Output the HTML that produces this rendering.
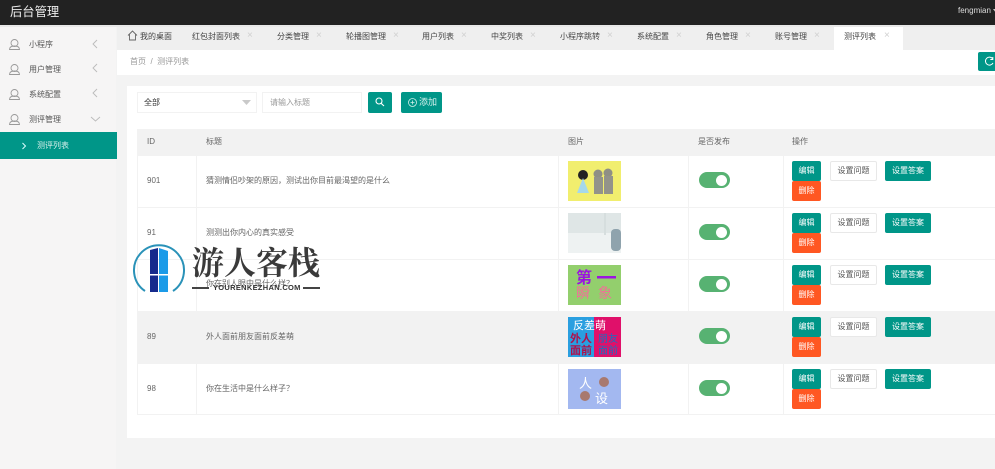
<!DOCTYPE html>
<html lang="zh">
<head>
<meta charset="utf-8">
<style>
*{box-sizing:border-box}
html,body{margin:0;padding:0;width:995px;height:469px;overflow:hidden;background:#f3f3f3;font-family:"Liberation Sans","Noto Sans CJK SC",sans-serif;color:#666}
#p{position:absolute;left:0;top:0;width:995px;height:469px;overflow:hidden;filter:blur(.35px)}
.a{position:absolute;white-space:nowrap}
.t{font-size:8px;line-height:12px;color:#444}
.x{font-size:10px;line-height:12px;color:#d0d0d0}
.m{font-size:8px;line-height:12px;color:#555}
.c{font-size:8px;line-height:12px;color:#666}
.b{height:20px;line-height:20px;font-size:8px;text-align:center;border-radius:2px;color:#fff;background:#009688}
.r{background:#ff5722}
.w{background:#fff;color:#555;border:1px solid #e8e8e8;line-height:18px}
.sw{left:699px;width:31px;height:16px;border-radius:8px;background:#57b272}
.sw i{position:absolute;left:17px;top:2.500px;width:11px;height:11px;border-radius:50%;background:#fff}
.hl{left:137px;width:858px;height:1px;background:#f2f2f2}
.vl{width:1px;background:#f2f2f2;top:129px;height:286px}
</style>
</head>
<body>
<div id="p">
<div class="a" style="left:0;top:0;width:995px;height:25px;background:#222"></div>
<div class="a" style="left:10px;top:2px;font-size:12.300px;line-height:20px;color:#eee">后台管理</div>
<div class="a" style="left:958px;top:5px;font-size:8px;line-height:12px;color:#ddd">fengmian</div>
<div class="a" style="left:993px;top:9px;width:0;height:0;border-left:3px solid transparent;border-right:3px solid transparent;border-top:4px solid #ccc"></div>

<div class="a" style="left:0;top:25px;width:995px;height:2px;background:#e8e8e8"></div>
<div class="a" style="left:0;top:27px;width:116px;height:442px;background:#f6f5f5"></div>

<!-- sidebar -->
<svg class="a" style="left:0;top:27px" width="116" height="105" fill="none" stroke="#999" stroke-width=".9">
<g><circle cx="14.500" cy="16" r="3.500"/><path d="M9.500 22.500c0-2.500 2-3.500 5-3.500s5 1 5 3.500z"/></g>
<g transform="translate(0,25)"><circle cx="14.500" cy="16" r="3.500"/><path d="M9.500 22.500c0-2.500 2-3.500 5-3.500s5 1 5 3.500z"/></g>
<g transform="translate(0,50)"><circle cx="14.500" cy="16" r="3.500"/><path d="M9.500 22.500c0-2.500 2-3.500 5-3.500s5 1 5 3.500z"/></g>
<g transform="translate(0,75)"><circle cx="14.500" cy="16" r="3.500"/><path d="M9.500 22.500c0-2.500 2-3.500 5-3.500s5 1 5 3.500z"/></g>
<path stroke="#bbb" d="M97 13l-4 4 4 4M97 37l-4 4 4 4M97 62l-4 4 4 4M91 90l4.500 4 4.500-4"/>
</svg>
<div class="a m" style="left:29px;top:39px">小程序</div>
<div class="a m" style="left:29px;top:64px">用户管理</div>
<div class="a m" style="left:29px;top:89px">系统配置</div>
<div class="a m" style="left:29px;top:114px">测评管理</div>
<div class="a" style="left:0;top:132px;width:117px;height:27px;background:#009688"></div>
<svg class="a" style="left:21px;top:142px" width="6" height="8" fill="none" stroke="#dff" stroke-width="1"><path d="M1.500 1l3 3-3 3"/></svg>
<div class="a" style="left:37px;top:140px;font-size:8px;line-height:12px;color:#d8f0ec">测评列表</div>

<!-- tabs -->
<div class="a" style="left:117px;top:27px;width:878px;height:23px;background:#efefef"></div>
<div class="a" style="left:834px;top:27px;width:69px;height:23px;background:#fff"></div>
<svg class="a" style="left:127px;top:30px" width="11" height="11" fill="none" stroke="#666" stroke-width=".9"><path d="M1 5.500L5.500 1 10 5.500M2.500 4.500V10h6V4.500"/></svg>
<div class="a t" style="left:140px;top:31px">我的桌面</div>
<div class="a t" style="left:192px;top:31px">红包封面列表</div><div class="a x" style="left:247px;top:30px">×</div>
<div class="a t" style="left:277px;top:31px">分类管理</div><div class="a x" style="left:316px;top:30px">×</div>
<div class="a t" style="left:346px;top:31px">轮播图管理</div><div class="a x" style="left:393px;top:30px">×</div>
<div class="a t" style="left:422px;top:31px">用户列表</div><div class="a x" style="left:461px;top:30px">×</div>
<div class="a t" style="left:491px;top:31px">中奖列表</div><div class="a x" style="left:530px;top:30px">×</div>
<div class="a t" style="left:560px;top:31px">小程序跳转</div><div class="a x" style="left:607px;top:30px">×</div>
<div class="a t" style="left:637px;top:31px">系统配置</div><div class="a x" style="left:676px;top:30px">×</div>
<div class="a t" style="left:706px;top:31px">角色管理</div><div class="a x" style="left:745px;top:30px">×</div>
<div class="a t" style="left:775px;top:31px">账号管理</div><div class="a x" style="left:814px;top:30px">×</div>
<div class="a t" style="left:844px;top:31px">测评列表</div><div class="a x" style="left:884px;top:30px">×</div>

<!-- breadcrumb -->
<div class="a" style="left:117px;top:50px;width:878px;height:25px;background:#fff"></div>
<div class="a" style="left:130px;top:56px;font-size:8px;line-height:12px;color:#999">首页&nbsp;&nbsp;/&nbsp;&nbsp;测评列表</div>
<div class="a" style="left:978px;top:52px;width:20px;height:19px;background:#009688;border-radius:2px"></div>
<svg class="a" style="left:984px;top:56px" width="11" height="11" fill="none" stroke="#fff" stroke-width="1"><path d="M8.500 2.500A4 4 0 1 0 9 7M8.800 1v2.500H6.300"/></svg>

<!-- card -->
<div class="a" style="left:127px;top:86px;width:868px;height:352px;background:#fff"></div>
<div class="a" style="left:137px;top:92px;width:120px;height:21px;border:1px solid #f2f2f2;background:#fff"></div>
<div class="a" style="left:144px;top:96px;font-size:8px;line-height:13px;color:#333">全部</div>
<svg class="a" style="left:242px;top:100px" width="9" height="5"><path d="M0 0h9L4.500 5z" fill="#c9c9c9"/></svg>
<div class="a" style="left:262px;top:92px;width:100px;height:21px;border:1px solid #f2f2f2;background:#fff"></div>
<div class="a" style="left:270px;top:96px;font-size:8px;line-height:13px;color:#999">请输入标题</div>
<div class="a" style="left:368px;top:92px;width:24px;height:21px;background:#009688;border-radius:2px"></div>
<svg class="a" style="left:375px;top:97px" width="10" height="10" fill="none" stroke="#fff" stroke-width="1.100"><circle cx="4" cy="4" r="3"/><path d="M6 6.200l3 2.800"/></svg>
<div class="a" style="left:401px;top:92px;width:41px;height:21px;background:#009688;border-radius:2px"></div>
<svg class="a" style="left:408px;top:98px" width="9" height="9" fill="none" stroke="#cfeee9" stroke-width=".8"><circle cx="4.500" cy="4.500" r="4"/><path d="M2.500 4.500h4M4.500 2.500v4"/></svg>
<div class="a" style="left:419px;top:96px;font-size:9px;line-height:13px;color:#d8f2ee">添加</div>

<!-- table -->
<div class="a" style="left:137px;top:129px;width:858px;height:26px;background:#f2f2f2"></div>
<div class="a" style="left:137px;top:311px;width:858px;height:52px;background:#f2f2f2"></div>
<div class="a hl" style="top:155px"></div>
<div class="a hl" style="top:207px"></div>
<div class="a hl" style="top:259px"></div>
<div class="a hl" style="top:311px"></div>
<div class="a hl" style="top:363px"></div>
<div class="a hl" style="top:414px"></div>
<div class="a vl" style="left:137px"></div>
<div class="a vl" style="left:196px"></div>
<div class="a vl" style="left:558px"></div>
<div class="a vl" style="left:688px"></div>
<div class="a vl" style="left:783px"></div>

<div class="a c" style="left:147px;top:136px">ID</div>
<div class="a c" style="left:206px;top:136px">标题</div>
<div class="a c" style="left:568px;top:136px">图片</div>
<div class="a c" style="left:698px;top:136px">是否发布</div>
<div class="a c" style="left:792px;top:136px">操作</div>

<div class="a c" style="left:147px;top:175px">901</div>
<div class="a c" style="left:206px;top:175px">猜测情侣吵架的原因，测试出你目前最渴望的是什么</div>
<div class="a c" style="left:147px;top:227px">91</div>
<div class="a c" style="left:206px;top:227px">测测出你内心的真实感受</div>
<div class="a c" style="left:206px;top:278px">你在别人眼中是什么样？</div>
<div class="a c" style="left:147px;top:331px">89</div>
<div class="a c" style="left:206px;top:331px">外人面前朋友面前反差萌</div>
<div class="a c" style="left:147px;top:383px">98</div>
<div class="a c" style="left:206px;top:383px">你在生活中是什么样子？</div>

<!-- thumbnails -->
<svg class="a" style="left:568px;top:161px" width="53" height="40">
<rect width="53" height="40" fill="#f1ee6e"/>
<circle cx="15" cy="14" r="5" fill="#222"/><path d="M9 32l6-15 6 15z" fill="#a6d8ea"/>
<circle cx="30" cy="13" r="4.500" fill="#8f8f85"/><circle cx="40" cy="12" r="4.500" fill="#8f8f85"/>
<rect x="26" y="16" width="9" height="17" fill="#93938a"/><rect x="36" y="15" width="9" height="18" fill="#93938a"/>
</svg>
<svg class="a" style="left:568px;top:213px" width="53" height="40">
<rect width="53" height="40" fill="#dfe6e6"/><rect y="20" width="53" height="20" fill="#eef2f2"/>
<rect x="36" y="0" width="2" height="22" fill="#d6dede"/><rect x="43" y="16" width="10" height="22" rx="4" fill="#8fa3ad"/>
</svg>
<svg class="a" style="left:568px;top:265px" width="53" height="40">
<rect width="53" height="40" fill="#93cf6d"/>
<text x="8" y="18" font-size="16" font-weight="700" fill="#9b14e0" font-family="Noto Sans CJK SC,sans-serif">第</text>
<rect x="29" y="11" width="19" height="2.500" fill="#9b14e0"/>
<text x="8" y="33" font-size="14" fill="#f07098" font-family="Noto Sans CJK SC,sans-serif">瞬</text>
<text x="30" y="33" font-size="14" fill="#f07098" font-family="Noto Sans CJK SC,sans-serif">象</text>
</svg>
<svg class="a" style="left:568px;top:317px" width="53" height="40">
<rect width="53" height="40" fill="#2a9fe0"/><rect x="26" width="27" height="40" fill="#e0106a"/>
<text x="5" y="12" font-size="11" fill="#fff" font-family="Noto Sans CJK SC,sans-serif">反差萌</text>
<text x="2" y="25" font-size="11" font-weight="700" fill="#b0104a" font-family="Noto Sans CJK SC,sans-serif">外人</text>
<text x="2" y="37" font-size="11" font-weight="700" fill="#b0104a" font-family="Noto Sans CJK SC,sans-serif">面前</text>
<text x="30" y="25" font-size="10" fill="#1a70c0" font-family="Noto Sans CJK SC,sans-serif">朋友</text>
<text x="30" y="37" font-size="10" fill="#1a70c0" font-family="Noto Sans CJK SC,sans-serif">面前</text>
</svg>
<svg class="a" style="left:568px;top:369px" width="53" height="40">
<rect width="53" height="40" fill="#a3b8f0"/>
<text x="11" y="19" font-size="13" fill="#fff" font-family="Noto Sans CJK SC,sans-serif">人</text>
<text x="27" y="34" font-size="13" fill="#fff" font-family="Noto Sans CJK SC,sans-serif">设</text>
<circle cx="36" cy="13" r="5" fill="#a8796f"/><circle cx="17" cy="27" r="5" fill="#a8796f"/>
</svg>

<!-- switches -->
<div class="a sw" style="top:172px"><i></i></div>
<div class="a sw" style="top:224px"><i></i></div>
<div class="a sw" style="top:276px"><i></i></div>
<div class="a sw" style="top:328px"><i></i></div>
<div class="a sw" style="top:380px"><i></i></div>

<!-- actions -->
<div class="a b" style="left:792px;top:161px;width:29px">编辑</div><div class="a b r" style="left:792px;top:181px;width:29px">删除</div><div class="a b w" style="left:830px;top:161px;width:47px">设置问题</div><div class="a b" style="left:885px;top:161px;width:46px">设置答案</div>
<div class="a b" style="left:792px;top:213px;width:29px">编辑</div><div class="a b r" style="left:792px;top:233px;width:29px">删除</div><div class="a b w" style="left:830px;top:213px;width:47px">设置问题</div><div class="a b" style="left:885px;top:213px;width:46px">设置答案</div>
<div class="a b" style="left:792px;top:265px;width:29px">编辑</div><div class="a b r" style="left:792px;top:285px;width:29px">删除</div><div class="a b w" style="left:830px;top:265px;width:47px">设置问题</div><div class="a b" style="left:885px;top:265px;width:46px">设置答案</div>
<div class="a b" style="left:792px;top:317px;width:29px">编辑</div><div class="a b r" style="left:792px;top:337px;width:29px">删除</div><div class="a b w" style="left:830px;top:317px;width:47px">设置问题</div><div class="a b" style="left:885px;top:317px;width:46px">设置答案</div>
<div class="a b" style="left:792px;top:369px;width:29px">编辑</div><div class="a b r" style="left:792px;top:389px;width:29px">删除</div><div class="a b w" style="left:830px;top:369px;width:47px">设置问题</div><div class="a b" style="left:885px;top:369px;width:46px">设置答案</div>

<!-- watermark -->
<svg class="a" style="left:132px;top:242px" width="54" height="52">
<path d="M13 49A25 25 0 1 1 41 49" fill="none" stroke="#2a92b8" stroke-width="2"/>
<path d="M18 8l8-2v44H18z" fill="#162a8c"/><path d="M27 6l9 3v41h-9z" fill="#1c9be8"/>
<rect x="18" y="32" width="18" height="1.500" fill="#fff"/>
</svg>
<div class="a" style="left:192px;top:240px;font-size:32px;line-height:42px;font-weight:700;color:#3a3a3a;font-family:'Noto Serif CJK SC',serif">游人客栈</div>
<div class="a" style="left:192px;top:287px;width:17px;height:1.500px;background:#444"></div>
<div class="a" style="left:303px;top:287px;width:17px;height:1.500px;background:#444"></div>
<div class="a" style="left:213px;top:282px;height:11px;font-size:7.500px;line-height:11px;font-weight:700;letter-spacing:.3px;color:#333">YOURENKEZHAN.COM</div>
</div>
</body>
</html>
